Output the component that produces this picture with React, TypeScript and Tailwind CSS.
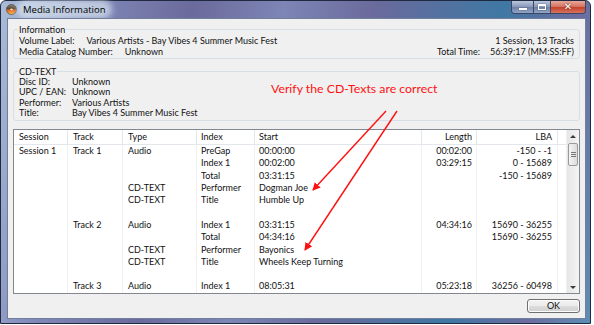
import React from 'react';

type Row = [string, string, string, string, string, string, string];

const rows: Row[] = [
  ['Session 1', 'Track 1', 'Audio', 'PreGap', '00:00:00', '00:02:00', '-150 - -1'],
  ['', '', '', 'Index 1', '00:02:00', '03:29:15', '0 - 15689'],
  ['', '', '', 'Total', '03:31:15', '', '-150 - 15689'],
  ['', '', 'CD-TEXT', 'Performer', 'Dogman Joe', '', ''],
  ['', '', 'CD-TEXT', 'Title', 'Humble Up', '', ''],
  ['', '', '', '', '', '', ''],
  ['', 'Track 2', 'Audio', 'Index 1', '03:31:15', '04:34:16', '15690 - 36255'],
  ['', '', '', 'Total', '04:34:16', '', '15690 - 36255'],
  ['', '', 'CD-TEXT', 'Performer', 'Bayonics', '', ''],
  ['', '', 'CD-TEXT', 'Title', 'Wheels Keep Turning', '', ''],
  ['', '', '', '', '', '', ''],
  ['', 'Track 3', 'Audio', 'Index 1', '08:05:31', '05:23:18', '36256 - 60498'],
];

const cols = 'grid grid-cols-[54px_55px_74px_58px_167px_55px_81px_8px]';

function DiscIcon() {
  return (
    <svg width="11" height="11" viewBox="0 0 11 11">
      <defs>
        <linearGradient id="disc" x1="0" y1="0" x2="0" y2="1">
          <stop offset="0" stopColor="#8a8578" />
          <stop offset="0.4" stopColor="#5a4a3a" />
          <stop offset="0.55" stopColor="#e0602a" />
          <stop offset="1" stopColor="#f7c948" />
        </linearGradient>
      </defs>
      <circle cx="5.5" cy="5.5" r="5" fill="url(#disc)" stroke="#4a3a2a" strokeWidth="0.6" />
      <ellipse cx="5.5" cy="5.5" rx="1.3" ry="1" fill="#f3e3b0" />
    </svg>
  );
}

function WindowButtons() {
  return (
    <div className="flex h-[13px] border border-t-0 border-[#3b4660] rounded-b-[4px] overflow-hidden mr-[4px]">
      <div className="w-[22px] flex items-center justify-center bg-[linear-gradient(#b9c6dd,#8796b9_50%,#6f7fa6_51%,#90a4c8)] border-r border-[#3b4660]">
        <div className="w-[8px] h-[2px] bg-white mt-[4px] shadow-[0_0_1px_#333]" />
      </div>
      <div className="w-[17px] flex items-center justify-center bg-[linear-gradient(#b9c6dd,#8796b9_50%,#6f7fa6_51%,#90a4c8)] border-r border-[#3b4660]">
        <div className="w-[8px] h-[6px] border border-white border-t-2 shadow-[0_0_1px_#333]" />
      </div>
      <div className="w-[34px] flex items-center justify-center bg-[linear-gradient(#e8a89a,#d4705e_50%,#c2412c_51%,#d8735c)]">
        <span className="text-white text-[10px] font-bold leading-none font-['DejaVu_Sans',sans-serif] [text-shadow:0_0_2px_#4a1010]">
          ✕
        </span>
      </div>
    </div>
  );
}

function Arrows() {
  return (
    <svg className="absolute left-0 top-0 pointer-events-none" width="594" height="325">
      <defs>
        <marker id="head" markerWidth="8" markerHeight="8" refX="7" refY="4" orient="auto" markerUnits="userSpaceOnUse">
          <path d="M0,0 L8,4 L0,8 Z" fill="#ff1010" />
        </marker>
      </defs>
      <line x1="386" y1="111" x2="313" y2="190" stroke="#ff1010" strokeWidth="1.4" markerEnd="url(#head)" />
      <line x1="397" y1="111" x2="305" y2="250" stroke="#ff1010" strokeWidth="1.4" markerEnd="url(#head)" />
    </svg>
  );
}

function Scrollbar() {
  return (
    <div className="w-[13px] flex flex-col bg-[linear-gradient(90deg,#e6e6e6,#f4f4f4)] border-l border-[#f0f0f0]">
      <div className="h-[12px] flex items-center justify-center">
        <div className="w-0 h-0 border-x-[3px] border-x-transparent border-b-[3px] border-b-[#3a3a3a]" />
      </div>
      <div className="h-[23px] mx-[1px] mt-[1px] rounded-[2px] border border-[#9a9a9a] bg-[linear-gradient(90deg,#f4f4f4,#dcdcdc)] flex flex-col items-center justify-center gap-[1px]">
        <div className="w-[5px] h-px bg-[#777]" />
        <div className="w-[5px] h-px bg-[#777]" />
        <div className="w-[5px] h-px bg-[#777]" />
      </div>
      <div className="flex-1" />
      <div className="h-[12px] flex items-center justify-center">
        <div className="w-0 h-0 border-x-[3px] border-x-transparent border-t-[3px] border-t-[#3a3a3a]" />
      </div>
    </div>
  );
}

export default function App() {
  return (
    <div className="relative w-[594px] h-[325px] bg-white font-['Lato',sans-serif] text-[#111] overflow-hidden">
      <div className="w-[591px] h-[324px] flex flex-col border border-[#1f2a40] rounded-t-[6px] bg-[linear-gradient(100deg,#a9bcd8_0%,#8088b8_14%,#6b6a9c_30%,#7d86b6_44%,#6a6a9c_58%,#3f78a4_78%,#6c6c9f_90%,#5d8db3_100%)]">
        {/* title bar */}
        <div className="h-[17px] flex items-start justify-between">
          <div className="flex items-center gap-[4px] pl-[5px] pt-[3px]">
            <DiscIcon />
            <span className="font-['Open_Sans',sans-serif] text-[9.5px] leading-[11px] text-black px-[2px] rounded-[6px] bg-[#d7e3ee]/70 shadow-[0_0_6px_4px_rgba(225,235,245,0.7)]">
              Media Information
            </span>
          </div>
          <WindowButtons />
        </div>

        {/* dialog body */}
        <div className="ml-[6px] mr-[4px] h-[301px] bg-[#f0f0f0] border border-[#6f7f9c] px-[5px] pt-[5px] flex flex-col text-[9px]">
          <fieldset className="border border-[#d5dfe5] rounded-[3px] px-[5px] pb-[1px] leading-[11px]">
            <legend className="px-[1px] -ml-px">Information</legend>
            <div className="flex justify-between">
              <div className="flex gap-[12px]">
                <span>Volume Label:</span>
                <span>Various Artists - Bay Vibes 4 Summer Music Fest</span>
              </div>
              <span>1 Session, 13 Tracks</span>
            </div>
            <div className="flex justify-between">
              <div className="flex gap-[12px]">
                <span>Media Catalog Number:</span>
                <span>Unknown</span>
              </div>
              <div className="flex gap-[10px]">
                <span>Total Time:</span>
                <span>56:39:17 (MM:SS:FF)</span>
              </div>
            </div>
          </fieldset>

          <fieldset className="mt-[7px] border border-[#d5dfe5] rounded-[3px] px-[5px] pb-[2px]">
            <legend className="px-[1px] -ml-px leading-[11px]">CD-TEXT</legend>
            <div className="grid grid-cols-[53px_1fr] leading-[10.3px]">
              <span>Disc ID:</span>
              <span>Unknown</span>
              <span>UPC / EAN:</span>
              <span>Unknown</span>
              <span>Performer:</span>
              <span>Various Artists</span>
              <span>Title:</span>
              <span>Bay Vibes 4 Summer Music Fest</span>
            </div>
          </fieldset>

          {/* list view */}
          <div className="mt-[8px] h-[165px] border border-[#828790] bg-white flex">
            <div className="flex-1 flex flex-col">
              <div className={`${cols} h-[15px] border-b border-[#e3e6ea] leading-[14px]`}>
                <div className="pl-[5px] border-r border-[#e3e6ea]">Session</div>
                <div className="pl-[5px] border-r border-[#e3e6ea]">Track</div>
                <div className="pl-[5px] border-r border-[#e3e6ea]">Type</div>
                <div className="pl-[4px] border-r border-[#e3e6ea]">Index</div>
                <div className="pl-[4px] border-r border-[#e3e6ea]">Start</div>
                <div className="pr-[4px] text-right border-r border-[#e3e6ea]">Length</div>
                <div className="pr-[5px] text-right border-r border-[#e3e6ea]">LBA</div>
                <div />
              </div>
              <div className="flex-1 flex flex-col">
                {rows.map((r, i) => (
                  <div key={i} className={`${cols} h-[12.3px] leading-[12.3px] whitespace-nowrap`}>
                    <div className="pl-[5px] border-r border-[#f0f0f0]">{r[0]}</div>
                    <div className="pl-[5px] border-r border-[#f0f0f0]">{r[1]}</div>
                    <div className="pl-[5px] border-r border-[#f0f0f0]">{r[2]}</div>
                    <div className="pl-[4px] border-r border-[#f0f0f0]">{r[3]}</div>
                    <div className="pl-[4px] border-r border-[#f0f0f0]">{r[4]}</div>
                    <div className="pr-[4px] text-right border-r border-[#f0f0f0]">{r[5]}</div>
                    <div className="pr-[5px] text-right border-r border-[#f0f0f0]">{r[6]}</div>
                    <div />
                  </div>
                ))}
              </div>
            </div>
            <Scrollbar />
          </div>

          <div className="flex justify-end pt-[5px]">
            <button className="w-[53px] h-[14px] rounded-[3px] border border-[#707070] bg-[linear-gradient(#f2f2f2,#ebebeb_50%,#dddddd_51%,#cfcfcf)] text-[9px] leading-[12px] shadow-[inset_0_0_0_1px_#fcfcfc]">
              OK
            </button>
          </div>
        </div>
      </div>

      {/* annotation */}
      <div className="absolute left-[271px] top-[81px] text-[12.3px] leading-[16px] text-[#ff1010] whitespace-nowrap">
        Verify the CD-Texts are correct
      </div>
      <Arrows />
    </div>
  );
}
